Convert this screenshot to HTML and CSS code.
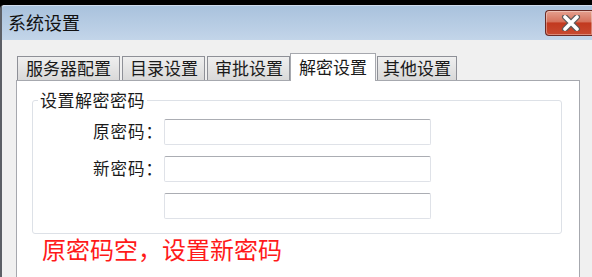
FILE: index.html
```html
<!DOCTYPE html>
<html lang="zh-CN">

<head>
  <meta charset="UTF-8" />
  <meta name="viewport" content="width=device-width, initial-scale=1.0" />
  <title>系统设置</title>
  <link rel="stylesheet" href="styles.css">
</head>

<body>

  <div class="window">

    <header class="titlebar">
      <span class="title">系统设置</span>
      <button class="close" type="button" aria-label="关闭">
        <svg width="22" height="16" viewBox="0 0 22 16">
          <path d="M5 2 L17 14 M17 2 L5 14" stroke="#5a5a5a" stroke-width="6" stroke-linecap="round" />
          <path d="M5 2 L17 14 M17 2 L5 14" stroke="#fff" stroke-width="3.6" stroke-linecap="round" />
        </svg>
      </button>
    </header>

    <div class="content">

      <nav class="tabs">
        <span class="tab">服务器配置</span>
        <span class="tab">目录设置</span>
        <span class="tab">审批设置</span>
        <span class="tab active">解密设置</span>
        <span class="tab">其他设置</span>
      </nav>

      <section class="panel">

        <fieldset class="group">
          <legend>设置解密密码</legend>
          <label class="row">
            <span class="label">原密码：</span>
            <input type="password" />
          </label>
          <label class="row">
            <span class="label">新密码：</span>
            <input type="password" />
          </label>
          <label class="row">
            <span class="label"></span>
            <input type="password" />
          </label>
        </fieldset>

        <p class="message">原密码空，设置新密码</p>

      </section>

    </div>

  </div>

</body>

</html>
```

FILE: styles.css
```css
* {
  border: 0;
  box-sizing: border-box;
  margin: 0;
  padding: 0;
}
:root {
  --font: "Noto Sans CJK SC", "Noto Sans", sans-serif;
  --tab-border: #8e9097;
  --field-border: #dde1e7;
}
html,
body {
  height: 100%;
  overflow: hidden;
}
body {
  background-color: #000;
  color: #1a1a1a;
  font: 16px/1.2 var(--font);
  padding-top: 5px;
}
.window {
  background-color: #f0f0f0;
  border-left: 2px solid #5c5f66;
  border-radius: 4px 0 0 0;
  display: flex;
  flex-direction: column;
  height: 100%;
}
.titlebar {
  align-items: flex-start;
  background: linear-gradient(#a9c2dd, #c3d5e9);
  border-top: 1px solid #d0dced;
  border-radius: 3px 0 0 0;
  display: flex;
  height: 35px;
  justify-content: space-between;
  padding-left: 6px;
}
.title {
  color: #111;
  font-size: 18px;
  line-height: 33px;
}
.close {
  align-items: center;
  background: linear-gradient(#e5a08f 0%, #d5725c 45%, #c2391f 50%, #c84a30 100%);
  border: 1px solid #6b2b25;
  border-right: 0;
  border-radius: 4px 0 0 4px;
  box-shadow: inset 0 0 0 1px rgba(255, 255, 255, 0.35);
  display: flex;
  height: 26px;
  justify-content: center;
  margin-top: 4px;
  padding-left: 4px;
  width: 47px;
}
.content {
  display: flex;
  flex: 1;
  flex-direction: column;
  padding: 13px 12px 0 14px;
}
.tabs {
  align-items: flex-end;
  display: flex;
  gap: 2px;
  height: 27px;
  padding-left: 1px;
}
.tab {
  background: linear-gradient(#efefef, #d9d9d9);
  border: 1px solid var(--tab-border);
  border-bottom: 0;
  color: #1a1a1a;
  font-size: 17px;
  height: 24px;
  line-height: 22px;
  padding: 0 6px 0 7px;
}
.tab:first-child {
  padding: 0 8px 0 8px;
}
.tab.active {
  background: #fff;
  border-color: #a6a8ae;
  height: 28px;
  line-height: 26px;
  margin: 0 -1px -1px -2px;
  padding: 0 8px 0 8px;
  position: relative;
}
.tab:last-child {
  padding: 0 5px 0 5px;
}
.panel {
  background-color: #fff;
  border: 1px solid #a6a8ae;
  border-bottom: 0;
  flex: 1;
  padding: 9px 17px 0 15px;
}
.group {
  border: 1px solid var(--field-border);
  border-radius: 3px;
  display: flex;
  flex-direction: column;
  gap: 11px;
  height: 144px;
  padding: 9px 0 0 0;
}
.group legend {
  color: #1a1a1a;
  font-size: 17px;
  letter-spacing: 0.5px;
  margin-left: 5px;
  padding: 0 2px;
}
.row {
  align-items: center;
  display: flex;
}
.label {
  font-size: 16.5px;
  letter-spacing: 1px;
  padding-right: 1px;
  text-align: right;
  width: 131px;
}
.row input {
  background-color: #fff;
  border: 1px solid #dfe2e8;
  border-top-color: #abadb3;
  border-radius: 2px;
  font: 15px var(--font);
  height: 26px;
  outline: none;
  width: 267px;
}
.message {
  color: #ff1a1a;
  font-size: 24px;
  line-height: 30px;
  margin: 0 0 0 10px;
}
```
